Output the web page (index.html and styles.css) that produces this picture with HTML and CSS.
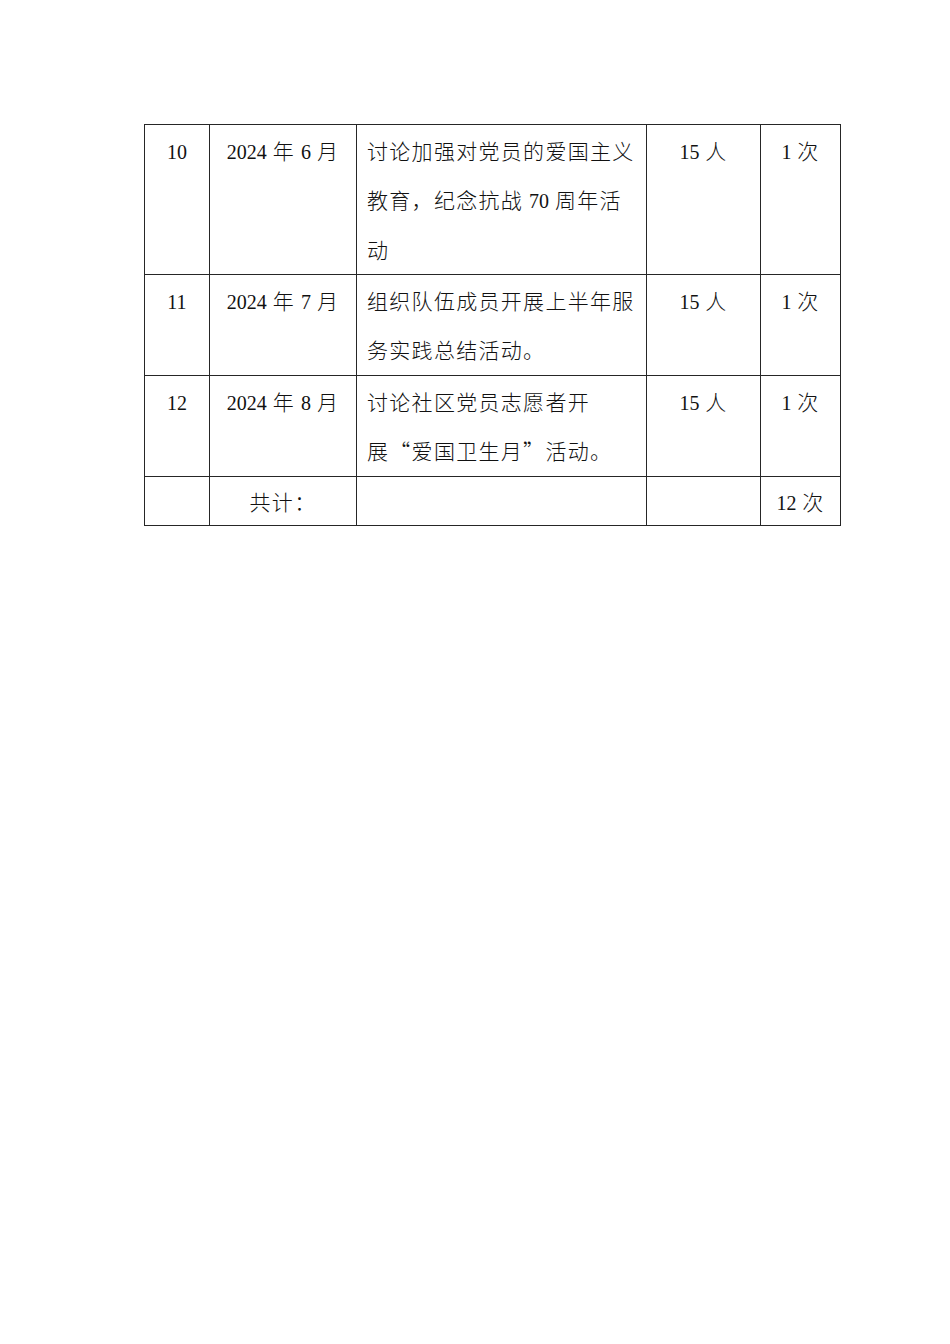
FILE: index.html
```html
<!DOCTYPE html>
<html lang="zh-CN">
<head>
<meta charset="utf-8">
<title>活动记录</title>
<link rel="stylesheet" href="styles.css">
</head>
<body>
<div class="page">
<table class="plan">
<colgroup>
<col class="c1"><col class="c2"><col class="c3"><col class="c4"><col class="c5">
</colgroup>
<tbody>
<tr class="r3">
<td class="ctr"><span class="n">10</span></td>
<td class="ctr"><span class="n">2024</span> 年 <span class="n">6</span> 月</td>
<td class="desc">讨论加强对党员的爱国主义<br>教育，纪念抗战 <span class="n">70</span> 周年活<br>动</td>
<td class="ctr"><span class="n">15</span> 人</td>
<td class="ctr"><span class="n">1</span> 次</td>
</tr>
<tr class="r2">
<td class="ctr"><span class="n">11</span></td>
<td class="ctr"><span class="n">2024</span> 年 <span class="n">7</span> 月</td>
<td class="desc">组织队伍成员开展上半年服<br>务实践总结活动。</td>
<td class="ctr"><span class="n">15</span> 人</td>
<td class="ctr"><span class="n">1</span> 次</td>
</tr>
<tr class="r2b">
<td class="ctr"><span class="n">12</span></td>
<td class="ctr"><span class="n">2024</span> 年 <span class="n">8</span> 月</td>
<td class="desc">讨论社区党员志愿者开<br>展“爱国卫生月”活动。</td>
<td class="ctr"><span class="n">15</span> 人</td>
<td class="ctr"><span class="n">1</span> 次</td>
</tr>
<tr class="r1">
<td class="ctr"></td>
<td class="ctr">共计：</td>
<td class="desc"></td>
<td class="ctr"></td>
<td class="ctr"><span class="n">12</span> 次</td>
</tr>
</tbody>
</table>
</div>
</body>
</html>
```
FILE: styles.css
```css
html, body {
  margin: 0;
  padding: 0;
  background: #ffffff;
}
.page {
  padding: 124px 0 0 144px;
  width: 950px;
  height: 1344px;
  box-sizing: border-box;
}
.plan {
  border-collapse: collapse;
  table-layout: fixed;
  width: 696px;
  font-family: "Noto Sans CJK SC", "Liberation Serif", serif;
  font-size: 21px;
  letter-spacing: 1.3px;
  color: #111111;
}
.c1 { width: 65px; }
.c2 { width: 147px; }
.c3 { width: 290px; }
.c4 { width: 114px; }
.c5 { width: 80px; }
.plan td {
  border: 1px solid #262626;
  vertical-align: top;
  padding: 1px 0 0 0;
  white-space: nowrap;
  font-weight: 300;
  line-height: 49.3px;
}
.r3 td { height: 148px; }
.r2 td { height: 98px; }
.r2b td { height: 99px; }
.r1 td { height: 47px; line-height: 47px; }
.ctr { text-align: center; }
.plan td.desc { padding-left: 10px; text-align: left; }
.n {
  font-family: "Liberation Serif", serif;
  font-size: 20px;
  letter-spacing: 0;
  line-height: 1;
  font-weight: 400;
}
```
